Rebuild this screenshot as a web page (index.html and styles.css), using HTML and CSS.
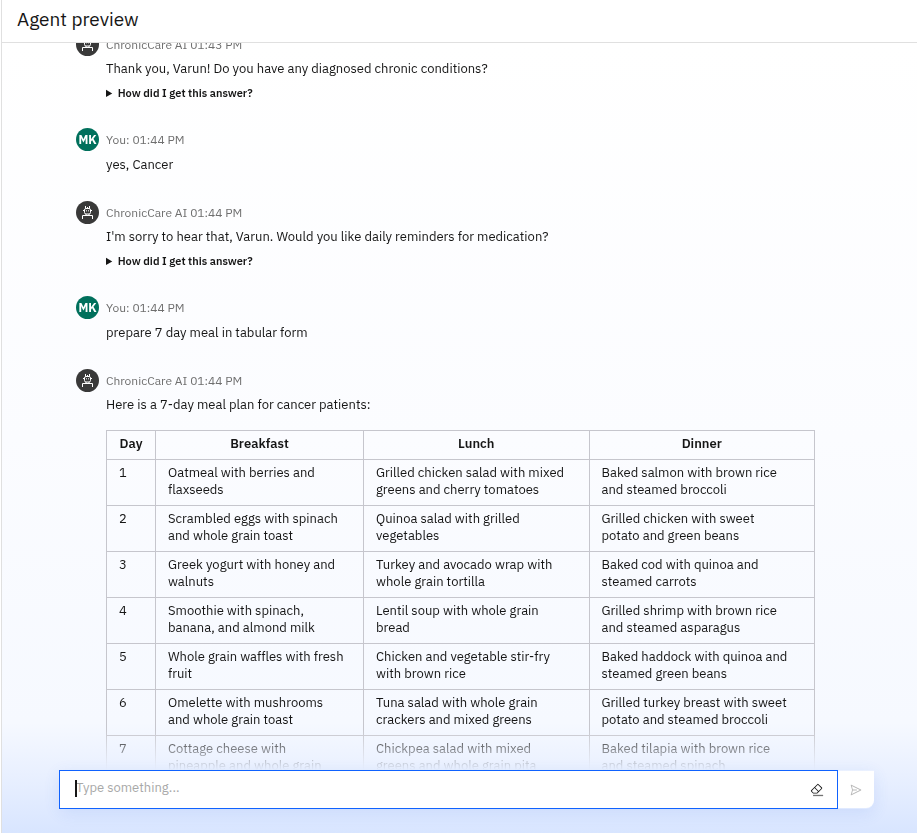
FILE: index.html
```html
<!DOCTYPE html>
<html lang="en">
<head>
<meta charset="utf-8">
<title>Agent preview</title>
<link rel="stylesheet" href="styles.css">
</head>
<body>
<svg class="symbols" aria-hidden="true">
  <symbol id="bot" viewBox="0 0 23 23">
    <g fill="none" stroke="#fff" stroke-width="1">
      <rect x="8.500" y="7.500" width="6" height="5.500" rx="1.500"/>
      <path d="M9.500 5v2.500M11.500 6v1.500M13.500 5v2.500M7 9.500h1.500M14.500 9.500H16M6.500 18v-3.500h10V18M10 13v1.500M13 13v1.500"/>
      <path d="M10.500 9v1.500M12.500 9v1.500" opacity=".7"/>
    </g>
  </symbol>
</svg>
<main class="preview">
  <header class="preview-header"><h1>Agent preview</h1></header>
  <div class="chat">
    <div class="scroller">
      <section class="thread">
        <article class="message">
          <span class="avatar bot"><svg aria-hidden="true"><use href="#bot"/></svg></span>
          <div class="meta">ChronicCare AI 01:43 PM</div>
          <div class="content">
            <p>Thank you, Varun! Do you have any diagnosed chronic conditions?</p>
            <details><summary>How did I get this answer?</summary></details>
          </div>
        </article>
        <article class="message user">
          <span class="avatar">MK</span>
          <div class="meta">You: 01:44 PM</div>
          <div class="content"><p>yes, Cancer</p></div>
        </article>
        <article class="message">
          <span class="avatar bot"><svg aria-hidden="true"><use href="#bot"/></svg></span>
          <div class="meta">ChronicCare AI 01:44 PM</div>
          <div class="content">
            <p>I'm sorry to hear that, Varun. Would you like daily reminders for medication?</p>
            <details><summary>How did I get this answer?</summary></details>
          </div>
        </article>
        <article class="message user">
          <span class="avatar">MK</span>
          <div class="meta">You: 01:44 PM</div>
          <div class="content"><p>prepare 7 day meal in tabular form</p></div>
        </article>
        <article class="message">
          <span class="avatar bot"><svg aria-hidden="true"><use href="#bot"/></svg></span>
          <div class="meta">ChronicCare AI 01:44 PM</div>
          <div class="content">
            <p>Here is a 7-day meal plan for cancer patients:</p>
            <table>
              <colgroup><col class="day"><col class="breakfast"><col class="lunch"><col class="dinner"></colgroup>
              <thead><tr><th>Day</th><th>Breakfast</th><th>Lunch</th><th>Dinner</th></tr></thead>
              <tbody>
                <tr><td>1</td><td>Oatmeal with berries and<br>flaxseeds</td><td>Grilled chicken salad with mixed greens and cherry tomatoes</td><td>Baked salmon with brown rice<br>and steamed broccoli</td></tr>
                <tr><td>2</td><td>Scrambled eggs with spinach<br>and whole grain toast</td><td>Quinoa salad with grilled<br>vegetables</td><td>Grilled chicken with sweet<br>potato and green beans</td></tr>
                <tr><td>3</td><td>Greek yogurt with honey and<br>walnuts</td><td>Turkey and avocado wrap with<br>whole grain tortilla</td><td>Baked cod with quinoa and<br>steamed carrots</td></tr>
                <tr><td>4</td><td>Smoothie with spinach,<br>banana, and almond milk</td><td>Lentil soup with whole grain<br>bread</td><td>Grilled shrimp with brown rice<br>and steamed asparagus</td></tr>
                <tr><td>5</td><td>Whole grain waffles with fresh<br>fruit</td><td>Chicken and vegetable stir-fry<br>with brown rice</td><td>Baked haddock with quinoa and<br>steamed green beans</td></tr>
                <tr><td>6</td><td>Omelette with mushrooms<br>and whole grain toast</td><td>Tuna salad with whole grain<br>crackers and mixed greens</td><td>Grilled turkey breast with sweet<br>potato and steamed broccoli</td></tr>
                <tr><td>7</td><td>Cottage cheese with<br>pineapple and whole grain</td><td>Chickpea salad with mixed<br>greens and whole grain pita</td><td>Baked tilapia with brown rice<br>and steamed spinach</td></tr>
              </tbody>
            </table>
          </div>
        </article>
      </section>
    </div>
    <form class="composer">
      <div class="field">
        <input type="text" placeholder="Type something..." aria-label="Message">
        <button type="button" class="clear" aria-label="Clear chat">
          <svg viewBox="0 0 32 32" aria-hidden="true"><path d="M7 27H30V30H7z" opacity=".6"/><path d="M27.380 10.510 19.450 2.590a2 2 0 0 0-2.830 0l-14 14a2 2 0 0 0 0 2.830L7.130 24h9.590L27.380 13.340A2 2 0 0 0 27.380 10.510zM15.890 22H8L4 18l6.310-6.310 7.930 7.920zm3.760-3.760-7.920-7.930L18 4 26 11.930z"/></svg>
        </button>
      </div>
      <button type="button" class="send" aria-label="Send">
        <svg viewBox="0 0 32 32" aria-hidden="true"><path d="M27.450 15.110l-22-11a1 1 0 0 0-1.080.120 1 1 0 0 0-.330 1L7 16 4 26.740A1 1 0 0 0 5 28a1 1 0 0 0 .450-.110l22-11a1 1 0 0 0 0-1.780zm-20.900 10L8.760 17H18V15H8.760L6.550 6.890 24.760 16z"/></svg>
      </button>
    </form>
  </div>
</main>
</body>
</html>
```
FILE: styles.css
```css
* { box-sizing: border-box; }
body {
  margin: 0;
  font: 13px/17px "IBM Plex Sans", Roboto, "Liberation Sans", sans-serif;
  color: #161616;
}
h1, p { margin: 0; }
.symbols { display: none; }
.preview {
  display: flex;
  flex-direction: column;
  height: 100vh;
  margin-left: 1px;
  border-left: 1px solid #e0e0e0;
}
.preview-header {
  padding: 7px 15px 11px;
  border-bottom: 1px solid #e0e0e0;
  background: #fff;
}
h1 { font-size: 19px; line-height: 24px; font-weight: 400; }
.chat {
  flex: 1;
  min-height: 0;
  display: flex;
  flex-direction: column;
  padding: 0 43px 24px 57px;
  background: linear-gradient(#fff 0%, #fbfcff 50%, #f6f9ff 86%, #e6eeff 94%, #d8e5ff 100%);
}
.scroller {
  flex: 1;
  min-height: 0;
  overflow: hidden;
  mask-image: linear-gradient(to top, transparent, #000 40px);
}
.thread {
  margin-top: -10px;
  padding: 0 59px 0 17px;
}
.message {
  display: grid;
  grid-template-columns: 23px 1fr;
  column-gap: 7px;
  row-gap: 4px;
  align-items: center;
  margin-bottom: 26px;
}
.message.user { margin-bottom: 28px; }
.user .content { padding-top: 1px; }
.avatar {
  display: flex;
  align-items: center;
  justify-content: center;
  width: 23px;
  height: 23px;
  border-radius: 50%;
  background: #00705c;
  color: #fff;
  font-size: 12px;
  font-weight: 700;
}
.avatar.bot { background: #393939; }
.avatar svg { width: 23px; height: 23px; }
.meta { font-size: 12px; color: #6f6f6f; }
.content { grid-column: 2; }
details { margin-top: 8px; }
summary { font-size: 11px; font-weight: 600; }
table {
  width: 100%;
  margin-top: 17px;
  border-collapse: collapse;
  table-layout: fixed;
}
.day { width: 49px; }
.breakfast { width: 208px; }
th, td {
  padding: 4px 12px 7px;
  border: 1px solid #c6c6cd;
  text-align: left;
  vertical-align: top;
}
th { font-weight: 600; text-align: center; }
.composer {
  display: flex;
  height: 39px;
  border-radius: 0 0 8px 8px;
  box-shadow: 0 4px 16px rgba(60, 110, 220, .12);
}
.field {
  position: relative;
  flex: 1;
  display: flex;
  align-items: center;
  border: 1px solid #0f62fe;
  background: #fff;
}
.field::before {
  content: "";
  position: absolute;
  left: 15px;
  top: 9px;
  width: 2px;
  height: 17px;
  background: #161616;
}
input {
  flex: 1;
  min-width: 0;
  padding: 0 16px 4px;
  border: 0;
  outline: 0;
  background: none;
  font: inherit;
}
input::placeholder { color: #a8a8a8; }
button {
  display: flex;
  align-items: center;
  justify-content: center;
  padding: 0;
  border: 0;
  background: #fff;
}
button svg { width: 14px; height: 14px; }
.clear { width: 40px; height: 37px; fill: #161616; }
.send {
  width: 36px;
  height: 37px;
  margin-top: 1px;
  border-radius: 0 0 8px 0;
  fill: #b8b8b8;
}
```
